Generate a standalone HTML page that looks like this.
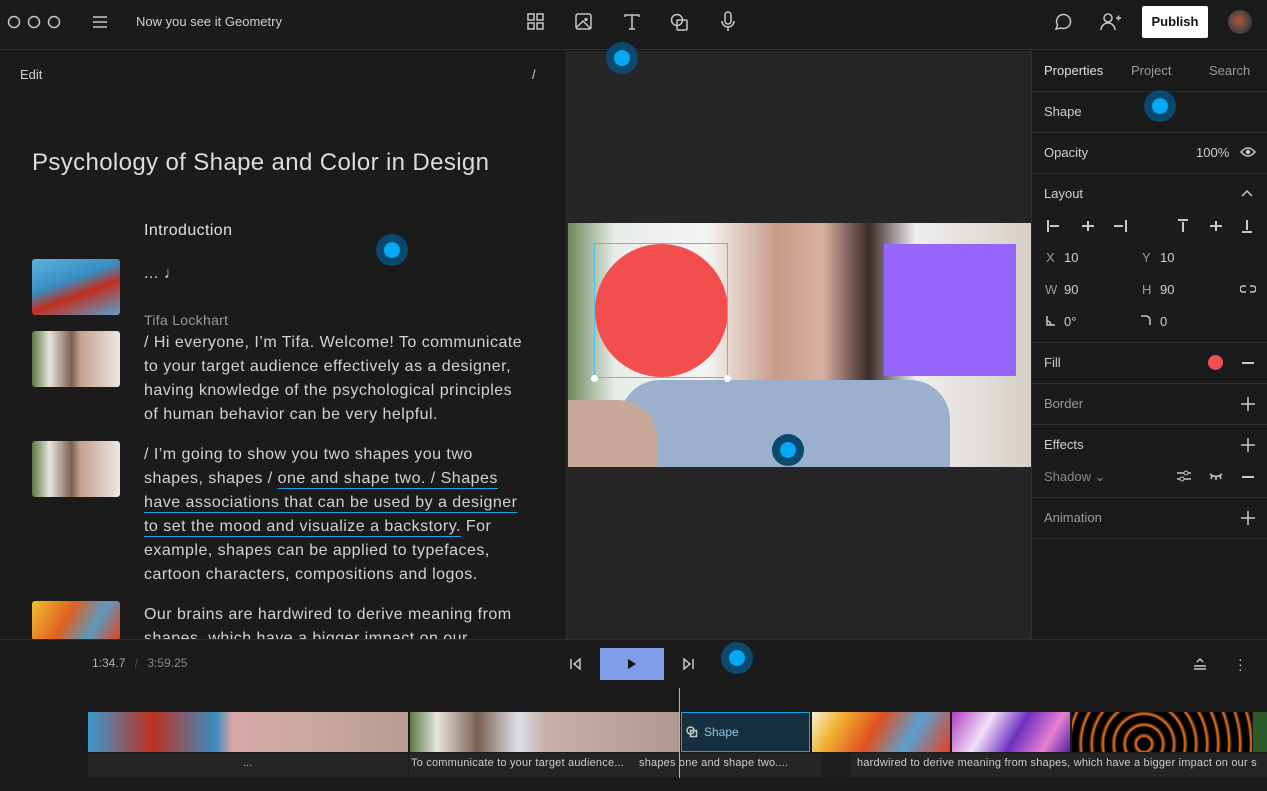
<!DOCTYPE html>
<html><head><meta charset="utf-8"><style>
*{margin:0;padding:0;box-sizing:border-box}
body{width:1267px;height:791px;background:#1b1b1b;font-family:"Liberation Sans",sans-serif;color:#d4d4d4;position:relative;overflow:hidden}
.a{position:absolute}
.t{font-size:13px;color:#cfcfcf}
.dot{position:absolute;width:32px;height:32px;border-radius:50%;background:#0b4a6e;margin:-16px 0 0 -16px}
.dot::after{content:"";position:absolute;left:8px;top:8px;width:16px;height:16px;border-radius:50%;background:#03a9f4}
.sec{position:absolute;left:1032px;width:235px;border-bottom:1px solid #303030}
.ic{stroke:#c8c8c8;fill:none;stroke-width:1.5}
.para{position:absolute;left:144px;width:384px;font-size:16px;line-height:24px;color:#d2d2d2;letter-spacing:0.48px}
.u{text-decoration:underline;text-decoration-color:#1aa3e8;text-underline-offset:5px}
.thumb{position:absolute;left:32px;width:88px;height:56px;border-radius:3px}
</style></head><body>
<div class="a" style="left:0;top:0;width:1267px;height:50px;border-bottom:1px solid #2e2e2e"></div>
<svg class="a" style="left:6px;top:14px" width="58" height="16"><g class="ic" stroke-width="1.2"><circle cx="8" cy="8" r="5.5"/><circle cx="28" cy="8" r="5.5"/><circle cx="48" cy="8" r="5.5"/></g></svg>
<svg class="a" style="left:92px;top:14px" width="16" height="16"><path class="ic" d="M1 3h14M1 8h14M1 13h14"/></svg>
<div class="a t" style="left:136px;top:14px">Now you see it Geometry</div>
<svg class="a" style="left:527px;top:13px" width="18" height="18"><g class="ic" stroke-width="1.3"><rect x="1" y="1" width="6" height="6"/><rect x="10" y="1" width="6" height="6"/><rect x="1" y="10" width="6" height="6"/><rect x="10" y="10" width="6" height="6"/></g></svg>
<svg class="a" style="left:575px;top:13px" width="18" height="18"><g class="ic" stroke-width="1.3"><rect x="1" y="1" width="15" height="15" rx="2"/><path d="M1 15l7-7 8 8M11 5.5a1 1 0 1 0 .1 0"/></g></svg>
<svg class="a" style="left:623px;top:13px" width="18" height="18"><path class="ic" d="M2 4V2h14v2M9 2v14M6 16h6"/></svg>
<svg class="a" style="left:670px;top:12px" width="20" height="20"><g class="ic" stroke-width="1.3"><circle cx="7" cy="8" r="5.5"/><rect x="7" y="8" width="10" height="10" rx="1"/></g></svg>
<svg class="a" style="left:720px;top:11px" width="16" height="22"><g class="ic" stroke-width="1.3"><rect x="5" y="1" width="6" height="12" rx="3"/><path d="M2 10a6 6 0 0 0 12 0M8 16v4"/></g></svg>
<svg class="a" style="left:1053px;top:12px" width="20" height="20"><path class="ic" d="M3 17l1.5-4A7 7 0 1 1 8 16z"/></svg>
<svg class="a" style="left:1100px;top:12px" width="22" height="20"><g class="ic" stroke-width="1.3"><circle cx="8" cy="6" r="4"/><path d="M1 18a7 7 0 0 1 14 0M16 6h5M18.5 3.5v5"/></g></svg>
<div class="a" style="left:1142px;top:6px;width:66px;height:32px;background:#fff;border-radius:2px;color:#111;font-size:13px;font-weight:bold;text-align:center;line-height:32px">Publish</div>
<div class="a" style="left:1228px;top:10px;width:24px;height:24px;border-radius:50%;background:radial-gradient(circle at 45% 45%,#b85040 0,#6a4a40 40%,#3a3a44 70%)"></div>
<div class="a" style="left:566px;top:51px;width:1px;height:589px;background:#2e2e2e"></div>
<div class="a t" style="left:20px;top:67px">Edit</div>
<div class="a t" style="left:532px;top:67px">/</div>
<div class="a" style="left:32px;top:149px;font-size:24px;color:#dcdcdc;letter-spacing:0.37px">Psychology of Shape and Color in Design</div>
<div class="a" style="left:144px;top:222px;font-size:16px;color:#e0e0e0;letter-spacing:0.4px">Introduction</div>
<div class="para" style="top:262px">... ♩</div>
<div class="a" style="left:144px;top:312px;font-size:14px;color:#9a9a9a;letter-spacing:0.3px">Tifa Lockhart</div>
<div class="para" style="top:331px">/ Hi everyone, I’m Tifa. Welcome! To communicate to your target audience effectively as a designer, having knowledge of the psychological principles of human behavior can be very helpful.</div>
<div class="para" style="top:443px">/ I’m going to show you two shapes you two shapes, shapes / <span class="u">one and shape two. / Shapes have associations that can be used by a designer to set the mood and visualize a backstory.</span> For example, shapes can be applied to typefaces, cartoon characters, compositions and logos.</div>
<div class="para" style="top:603px;height:37px;overflow:hidden">Our brains are hardwired to derive meaning from shapes, which have a bigger impact on our</div>
<div class="thumb" style="top:259px;background:linear-gradient(160deg,#5ab4e0 0,#3a8cc0 40%,#c03020 60%,#5aa0d0 100%)"></div>
<div class="thumb" style="top:331px;background:linear-gradient(90deg,#5a7a40 0,#e8e4e0 20%,#7a6050 45%,#c8a090 55%,#eae8e6 100%)"></div>
<div class="thumb" style="top:441px;background:linear-gradient(90deg,#5a7a40 0,#e8e4e0 20%,#7a6050 45%,#c8a090 55%,#eae8e6 100%)"></div>
<div class="thumb" style="top:601px;height:39px;background:linear-gradient(120deg,#f0c030 0,#e06020 40%,#5a9ac0 70%,#e84020 100%)"></div>
<div class="a" style="left:567px;top:51px;width:465px;height:589px;background:#262626"></div>
<div class="a" style="left:568px;top:223px;width:463px;height:244px;background:linear-gradient(90deg,#6a8a5a 0,#e8ece8 10%,#f4f4f4 30%,#c89a88 45%,#d8b0a0 55%,#3a2a28 65%,#eeeeee 75%,#d8d0c8 100%)"></div>
<div class="a" style="left:620px;top:380px;width:330px;height:87px;background:#9ab0cc;border-radius:40px 40px 0 0"></div>
<div class="a" style="left:568px;top:400px;width:90px;height:67px;background:#c8a898;border-radius:0 40px 0 0"></div>
<div class="a" style="left:595px;top:244px;width:133px;height:133px;border-radius:50%;background:#f34e4e"></div>
<div class="a" style="left:594px;top:243px;width:134px;height:135px;border:1px solid #4cc0f0"></div>
<div class="a" style="left:591px;top:375px;width:7px;height:7px;border-radius:50%;background:#fff"></div>
<div class="a" style="left:724px;top:375px;width:7px;height:7px;border-radius:50%;background:#fff"></div>
<div class="a" style="left:884px;top:244px;width:132px;height:132px;background:#9665fb"></div>
<div class="a" style="left:1031px;top:51px;width:1px;height:589px;background:#2e2e2e"></div>
<div class="sec" style="top:51px;height:41px"></div>
<div class="a t" style="left:1044px;top:63px;color:#e0e0e0">Properties</div>
<div class="a t" style="left:1131px;top:63px;color:#9a9a9a">Project</div>
<div class="a t" style="left:1209px;top:63px;color:#9a9a9a">Search</div>
<div class="sec" style="top:92px;height:41px"></div>
<div class="a t" style="left:1044px;top:104px">Shape</div>
<div class="sec" style="top:133px;height:41px"></div>
<div class="a t" style="left:1044px;top:145px">Opacity</div>
<div class="a t" style="left:1196px;top:145px">100%</div>
<svg class="a" style="left:1240px;top:146px" width="16" height="12"><path class="ic" d="M1 6q7-8 14 0q-7 8-14 0z"/><circle cx="8" cy="6" r="2.2" fill="#c8c8c8"/></svg>
<div class="sec" style="top:174px;height:169px"></div>
<div class="a t" style="left:1044px;top:186px">Layout</div>
<svg class="a" style="left:1241px;top:189px" width="12" height="8"><path class="ic" d="M1 7l5-5 5 5"/></svg>
<svg class="a" style="left:1046px;top:219px" width="212" height="14"><g stroke="#c8c8c8" stroke-width="2" fill="none"><path d="M2 1v12M4 7h9M36 7h12M42 2v10M68 7h9M80 1v12M132 1h10M137 3v10M164 7h12M170 2v10M196 13h10M201 1v10"/></g></svg>
<div class="a t" style="left:1046px;top:250px;color:#9a9a9a">X</div><div class="a t" style="left:1064px;top:250px">10</div>
<div class="a t" style="left:1142px;top:250px;color:#9a9a9a">Y</div><div class="a t" style="left:1160px;top:250px">10</div>
<div class="a t" style="left:1045px;top:282px;color:#9a9a9a">W</div><div class="a t" style="left:1064px;top:282px">90</div>
<div class="a t" style="left:1142px;top:282px;color:#9a9a9a">H</div><div class="a t" style="left:1160px;top:282px">90</div>
<svg class="a" style="left:1240px;top:285px" width="16" height="8"><path class="ic" stroke-width="1.2" d="M6 1H3a3 3 0 0 0 0 6h3M10 1h3a3 3 0 0 1 0 6h-3"/></svg>
<svg class="a" style="left:1046px;top:316px" width="10" height="10"><path class="ic" stroke-width="1.2" d="M1 0v9h8M1 5a4 4 0 0 1 4 4"/></svg>
<div class="a t" style="left:1064px;top:314px">0°</div>
<svg class="a" style="left:1141px;top:315px" width="10" height="10"><path class="ic" stroke-width="1.2" d="M0 1h5a4 4 0 0 1 4 4v5"/></svg>
<div class="a t" style="left:1160px;top:314px">0</div>
<div class="sec" style="top:343px;height:41px"></div>
<div class="a t" style="left:1044px;top:355px">Fill</div>
<div class="a" style="left:1208px;top:355px;width:15px;height:15px;border-radius:50%;background:#f34e4e"></div>
<div class="a" style="left:1242px;top:362px;width:12px;height:1.5px;background:#c8c8c8"></div>
<div class="sec" style="top:384px;height:41px"></div>
<div class="a t" style="left:1044px;top:396px;color:#9a9a9a">Border</div>
<svg class="a" style="left:1241px;top:397px" width="14" height="14"><path class="ic" d="M7 0v14M0 7h14"/></svg>
<div class="sec" style="top:425px;height:73px"></div>
<div class="a t" style="left:1044px;top:437px">Effects</div>
<svg class="a" style="left:1241px;top:438px" width="14" height="14"><path class="ic" d="M7 0v14M0 7h14"/></svg>
<div class="a t" style="left:1044px;top:469px;color:#8a8a8a">Shadow ⌄</div>
<svg class="a" style="left:1177px;top:470px" width="14" height="12"><path class="ic" stroke-width="1.1" d="M0 3h14M0 9h14"/><circle cx="9" cy="3" r="2" fill="#1b1b1b" stroke="#c8c8c8"/><circle cx="5" cy="9" r="2" fill="#1b1b1b" stroke="#c8c8c8"/></svg>
<svg class="a" style="left:1209px;top:472px" width="14" height="8"><path class="ic" stroke-width="1.1" d="M1 2q6 5 12 0M3 4l-1 3M7 5v3M11 4l1 3"/></svg>
<div class="a" style="left:1242px;top:476px;width:12px;height:1.5px;background:#c8c8c8"></div>
<div class="sec" style="top:498px;height:41px"></div>
<div class="a t" style="left:1044px;top:510px;color:#9a9a9a">Animation</div>
<svg class="a" style="left:1241px;top:511px" width="14" height="14"><path class="ic" d="M7 0v14M0 7h14"/></svg>
<div class="a" style="left:0;top:639px;width:1267px;height:1px;background:#2e2e2e"></div>
<div class="a" style="left:92px;top:656px;font-size:12px;color:#b0b0b0">1:34.7 <span style="color:#555;margin:0 6px">/</span> <span style="color:#888">3:59.25</span></div>
<svg class="a" style="left:570px;top:658px" width="12" height="12"><path class="ic" stroke-width="1.3" d="M1 1v10M10 1L4 6l6 5z"/></svg>
<div class="a" style="left:600px;top:648px;width:64px;height:32px;background:#7f9ce8"></div>
<svg class="a" style="left:627px;top:659px" width="10" height="10"><path d="M1 0l8 5-8 5z" fill="#111"/></svg>
<svg class="a" style="left:682px;top:658px" width="12" height="12"><path class="ic" stroke-width="1.3" d="M11 1v10M2 1l6 5-6 5z"/></svg>
<svg class="a" style="left:1193px;top:657px" width="14" height="14"><path class="ic" stroke-width="1.2" d="M1 9h12M1 12h12M4 5l3-3 3 3"/></svg>
<div class="a" style="left:1238px;top:657px;color:#ccc;font-size:14px;line-height:5px">·<br>·<br>·</div>
<div class="a" style="left:88px;top:712px;width:320px;height:40px;background:linear-gradient(90deg,#3a9ad0 0,#c03020 20%,#3a8cc0 40%,#d8a8a8 45%,#c8a8a0 70%,#b89a90 100%)"></div>
<div class="a" style="left:410px;top:712px;width:270px;height:40px;background:linear-gradient(90deg,#5a7a40 0,#e8e4e0 10%,#7a6050 25%,#dde0e8 40%,#c8b0a8 50%,#b09890 100%)"></div>
<div class="a" style="left:681px;top:712px;width:129px;height:40px;background:#163040;border:1px solid #1aa3e8;color:#8fc3e0;font-size:12px;line-height:38px;padding-left:22px">Shape</div>
<svg class="a" style="left:686px;top:726px" width="12" height="12"><g class="ic" stroke="#8fc3e0" stroke-width="1"><circle cx="4.5" cy="4.5" r="3.5"/><rect x="4.5" y="4.5" width="6" height="6"/></g></svg>
<div class="a" style="left:812px;top:712px;width:138px;height:40px;background:linear-gradient(120deg,#f8f0d0 0,#f0b030 20%,#e05020 45%,#5aa0d0 70%,#e84020 100%)"></div>
<div class="a" style="left:952px;top:712px;width:118px;height:40px;background:linear-gradient(120deg,#b040c0 0,#f0e0f8 30%,#7030c0 55%,#e880d0 80%,#5020a0 100%)"></div>
<div class="a" style="left:1072px;top:712px;width:180px;height:40px;background:repeating-radial-gradient(circle at 40% 80%,#000 0,#000 6px,#f07820 8px,#000 11px)"></div>
<div class="a" style="left:1253px;top:712px;width:14px;height:40px;background:#2a5a2a"></div>
<div class="a" style="left:88px;top:753px;width:1179px;height:24px;background:#252525"></div>
<div class="a" style="left:243px;top:757px;font-size:11px;color:#aaa">...</div>
<div class="a" style="left:411px;top:757px;font-size:11px;color:#ccc;letter-spacing:0.2px">To communicate to your target audience...</div>
<div class="a" style="left:639px;top:757px;font-size:11px;color:#ccc;letter-spacing:0.2px">shapes one and shape two....</div>
<div class="a" style="left:857px;top:757px;font-size:11px;color:#ccc;white-space:nowrap;letter-spacing:0.2px">hardwired to derive meaning from shapes, which have a bigger impact on our s</div>
<div class="a" style="left:408px;top:753px;width:1px;height:24px;background:#1b1b1b"></div>
<div class="a" style="left:821px;top:753px;width:30px;height:24px;background:#1f1f1f"></div>
<div class="a" style="left:679px;top:688px;width:1px;height:90px;background:#9ab8e0"></div>
<div class="dot" style="left:622px;top:58px"></div>
<div class="dot" style="left:392px;top:250px"></div>
<div class="dot" style="left:1160px;top:106px"></div>
<div class="dot" style="left:788px;top:450px"></div>
<div class="dot" style="left:737px;top:658px"></div>
</body></html>
